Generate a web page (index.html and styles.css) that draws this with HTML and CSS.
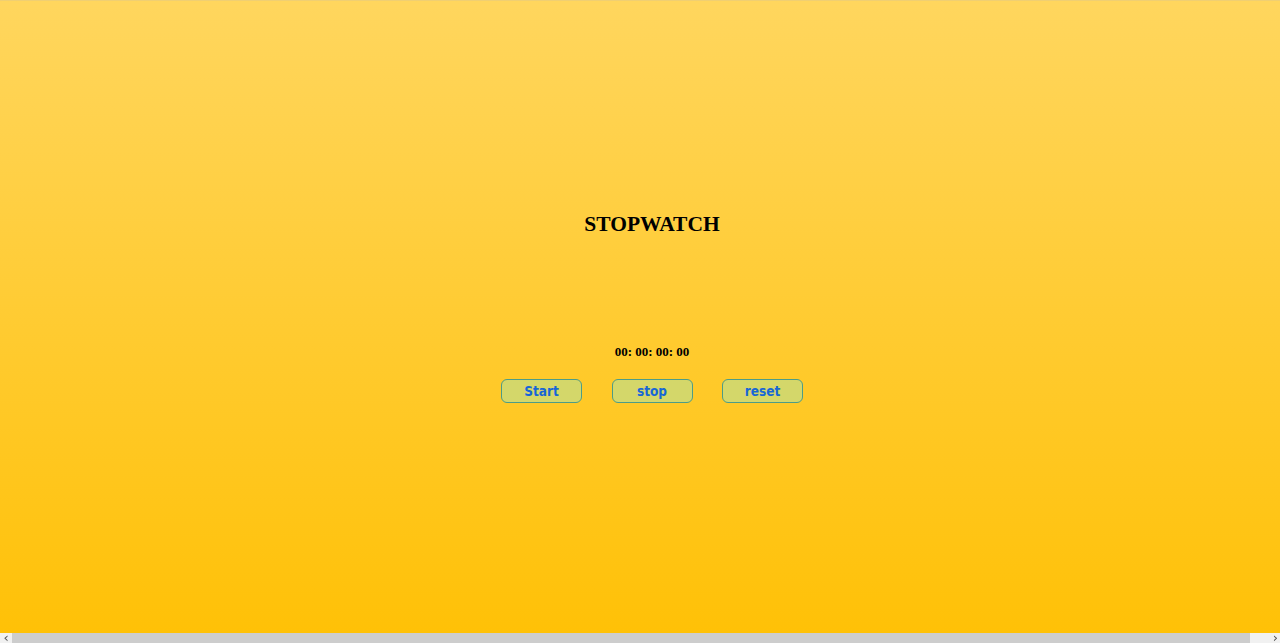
FILE: index.html
```html
<!DOCTYPE html>
<html lang="en">
<head>
<meta charset="utf-8">
<title>Stopwatch</title>
<link rel="stylesheet" href="styles.css">
</head>
<body>
<div class="page">
  <h1 class="title">STOPWATCH</h1>
  <div class="timer">00: 00: 00: 00</div>
  <div class="controls">
    <button class="btn">Start</button>
    <button class="btn">stop</button>
    <button class="btn">reset</button>
  </div>
</div>
<div class="hscroll">
  <span class="hscroll-btn">&#8249;</span>
  <span class="hscroll-thumb"></span>
  <span class="hscroll-end">&#8250;</span>
</div>
</body>
</html>
```

FILE: styles.css
```css
html {
  min-height: 100%;
  background: linear-gradient(#ffd65e, #ffc107 98%);
  border-top: 1px solid #f0cf72;
}
body {
  margin: 0 8px;
  font-family: "Liberation Serif", "Times New Roman", serif;
  overflow: hidden;
}
.page {
  width: calc(100vw + 8px);
  display: flex;
  flex-direction: column;
  align-items: center;
}
.title {
  margin: 211px 0 0;
  font-size: 21.5px;
  font-weight: bold;
  line-height: 25px;
  color: #000;
}
.timer {
  margin-top: 107px;
  font-size: 13px;
  font-weight: bold;
  line-height: 15px;
}
.controls {
  margin-top: 20px;
  display: flex;
  gap: 29.5px;
}
.btn {
  width: 81px;
  height: 24px;
  padding: 0;
  background: #d4d76a;
  border: 1.5px solid #4d9c86;
  border-radius: 6px;
  color: #1766d6;
  font-family: "DejaVu Sans Condensed", "DejaVu Sans", Verdana, sans-serif;
  font-stretch: condensed;
  font-weight: bold;
  font-size: 13.5px;
}
.hscroll {
  position: fixed;
  left: 0;
  right: 0;
  bottom: 0;
  height: 10px;
  display: flex;
  background: #f1f1f1;
  font-family: "DejaVu Sans", sans-serif;
  font-size: 13px;
  line-height: 10px;
  color: #505050;
}
.hscroll-btn {
  width: 12px;
  text-align: center;
}
.hscroll-thumb {
  width: 1238px;
  background: #cdcdcd;
}
.hscroll-end {
  flex: 1;
  text-align: right;
  padding-right: 2px;
}
```
